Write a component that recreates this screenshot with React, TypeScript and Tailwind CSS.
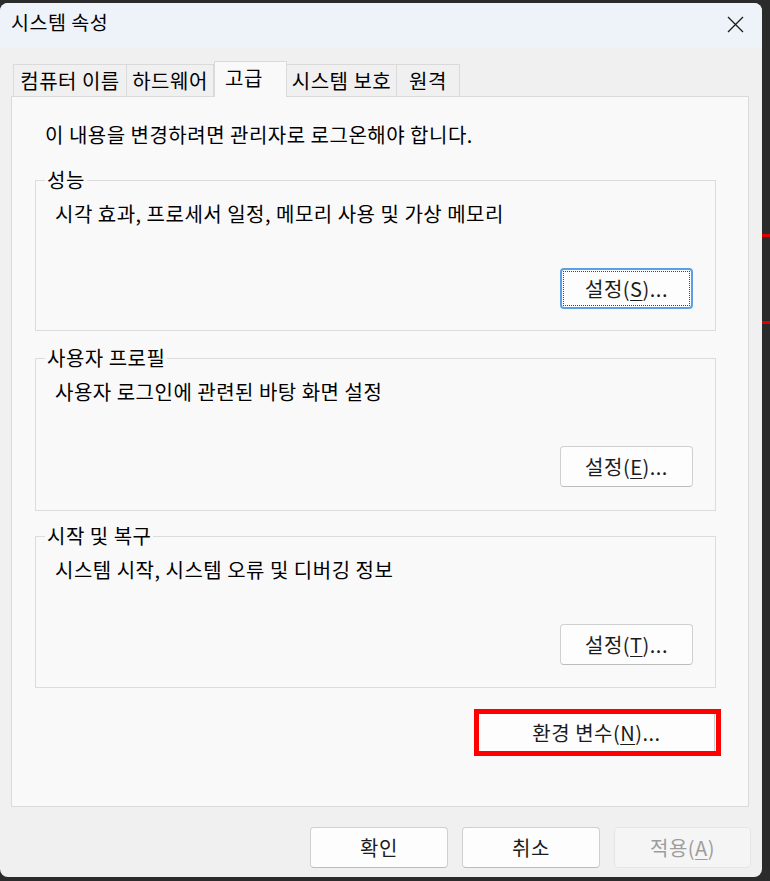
import React from "react";

const FONT = { fontFamily: '"Noto Sans CJK KR", "Noto Sans", sans-serif' };

function U({ c }: { c: string }) {
  return <span className="underline underline-offset-[3px] decoration-[1px]">{c}</span>;
}

function Btn({ children, focused, w = "w-[133px]" }: { children: React.ReactNode; focused?: boolean; w?: string }) {
  return (
    <div
      className={`${w} h-[41px] relative flex items-center justify-center rounded-[4px] bg-[#fdfdfd] text-[20px] leading-[24px] text-[#1b1b1b] ${
        focused ? "border-2 border-[#5a9fe3]" : "border border-[#d0d0d0] border-b-[#bdbdbd]"
      }`}
    >
      {focused && <span className="absolute inset-[1px] border border-dotted border-[#444]" />}
      <span className="relative">{children}</span>
    </div>
  );
}

function Group({ title, desc, btn, mt, h, focused }: { title: string; desc: string; btn: React.ReactNode; mt: string; h: string; focused?: boolean }) {
  return (
    <fieldset className={`${mt} ${h} ml-[23px] w-[681px] border border-[#dcdcdc] p-0`}>
      <legend className="ml-[9px] px-[2px] text-[20px] leading-[24px] text-black">{title}</legend>
      <div className="ml-[19px] mt-[10px] text-[20px] leading-[24px] text-black">{desc}</div>
      <div className="ml-[524px] mt-[42px]">
        <Btn focused={focused}>{btn}</Btn>
      </div>
    </fieldset>
  );
}

export default function App() {
  const tabs = [
    { t: "컴퓨터 이름", w: "w-[114px]" },
    { t: "하드웨어", w: "w-[88px]" },
    { t: "고급", w: "w-[73px]", sel: true },
    { t: "시스템 보호", w: "w-[111px]" },
    { t: "원격", w: "w-[64px]" },
  ];
  return (
    <div style={FONT} className="w-[770px] h-[881px] bg-[#2b2b2b] flex flex-col overflow-hidden tracking-[0.5px]">
      <div className="h-[3px] shrink-0" />
      <div className="flex flex-1">
        {/* dialog */}
        <div className="w-[762px] h-[874px] shrink-0 bg-[#f0f0f0] rounded-[8px] overflow-hidden flex flex-col">
          {/* title bar */}
          <div className="h-[45px] shrink-0 bg-[#eef3f9] flex items-center justify-between pl-[11px] pr-[18px] pb-[8px]">
            <span className="text-[19.5px] leading-[24px] text-black">시스템 속성</span>
            <svg width="17" height="17" viewBox="0 0 17 17" className="mt-[6px]">
              <path d="M1 1 L16 16 M16 1 L1 16" stroke="#1a1a1a" strokeWidth="1.3" fill="none" />
            </svg>
          </div>
          {/* body */}
          <div className="flex flex-col pl-[11px] pr-[13px] pt-[13px]">
            {/* tabs */}
            <div className="flex items-end pl-[2px] h-[35px]">
              {tabs.map((tab) =>
                tab.sel ? (
                  <div
                    key={tab.t}
                    className={`${tab.w} h-[36px] -mb-px relative z-10 bg-[#f9f9f9] border border-b-0 border-[#dadada] pl-[10px] pt-[4px] text-[20px] leading-[24px] text-black`}
                  >
                    {tab.t}
                  </div>
                ) : (
                  <div
                    key={tab.t}
                    className={`${tab.w} h-[32px] bg-[#f0f0f0] border border-b-0 border-[#dadada] -ml-px first:ml-0 flex items-center justify-center pt-[1px] text-[20px] leading-[24px] text-black whitespace-nowrap`}
                  >
                    {tab.t}
                  </div>
                )
              )}
            </div>
            {/* panel */}
            <div className="h-[711px] w-[738px] border border-[#dadada] bg-[#f9f9f9] pt-[26px] flex flex-col">
              <div className="ml-[33px] text-[20px] leading-[24px] text-black">
                이 내용을 변경하려면 관리자로 로그온해야 합니다.
              </div>
              <Group
                mt="mt-[21px]"
                h="h-[163px]"
                title="성능"
                desc="시각 효과, 프로세서 일정, 메모리 사용 및 가상 메모리"
                focused
                btn={<>설정(<U c="S" />)...</>}
              />
              <Group
                mt="mt-[15px]"
                h="h-[165px]"
                title="사용자 프로필"
                desc="사용자 로그인에 관련된 바탕 화면 설정"
                btn={<>설정(<U c="E" />)...</>}
              />
              <Group
                mt="mt-[13px]"
                h="h-[164px]"
                title="시작 및 복구"
                desc="시스템 시작, 시스템 오류 및 디버깅 정보"
                btn={<>설정(<U c="T" />)...</>}
              />
              <div className="ml-[462px] mt-[21px] w-[247px] h-[47px] border-[5px] border-[#ff0000]">
                <div className="h-full w-[236px] bg-[#fdfdfd] border-r border-[#cfcfcf] flex items-center justify-center text-[20px] leading-[24px] text-[#1b1b1b]">
                  환경 변수(<U c="N" />)...
                </div>
              </div>
            </div>
            {/* footer */}
            <div className="flex justify-end gap-[14px] mt-[20px] -mr-[2px]">
              <Btn w="w-[138px]">확인</Btn>
              <Btn w="w-[138px]">취소</Btn>
              <div className="w-[137px] h-[41px] flex items-center justify-center rounded-[4px] bg-[#f5f5f5] border border-[#e5e5e5] text-[20px] leading-[24px] text-[#9d9d9d]">
                적용(<U c="A" />)
              </div>
            </div>
          </div>
        </div>
        {/* right background strip */}
        <div className="flex-1 flex flex-col">
          <div className="h-[231px]" />
          <div className="h-[3px] bg-[#e00000]" />
          <div className="h-[84px]" />
          <div className="h-[3px] bg-[#e00000]" />
        </div>
      </div>
    </div>
  );
}
